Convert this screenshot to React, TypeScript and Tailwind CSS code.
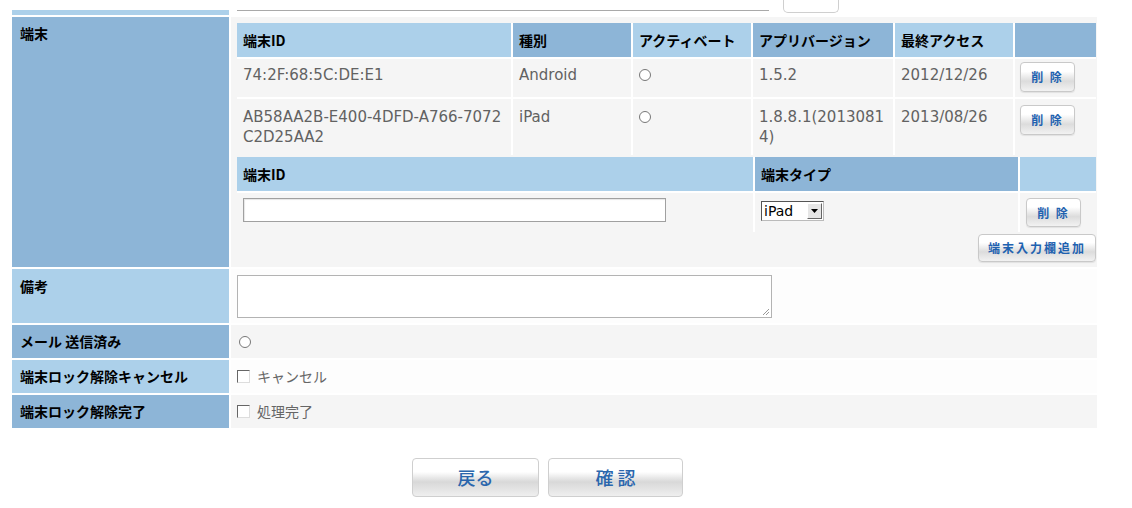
import React from "react";

const jp = "font-['Noto_Sans_CJK_JP',sans-serif]";
const dv = "font-['DejaVu_Sans','Noto_Sans_CJK_JP',sans-serif]";
const DARK = "bg-[#8db5d7]";
const LIGHT = "bg-[#acd0ea]";

function SmallBtn({ label, w = "w-[55px]", h = "h-[30px]" }: { label: string; w?: string; h?: string }) {
  return (
    <div
      className={`${w} ${h} ${jp} flex items-center justify-center rounded-[4px] border border-[#c9c9c9] bg-[linear-gradient(#ffffff_0%,#ffffff_30%,#dcdcdc_65%,#f2f2f2_100%)] text-[12px] font-bold tracking-[2px] text-[#1f62b0] shadow-[0_1px_1px_rgba(0,0,0,0.08)]`}
    >
      {label}
    </div>
  );
}

function BigBtn({ label, w }: { label: string; w: string }) {
  return (
    <div
      className={`${w} h-[39px] ${jp} flex items-center justify-center rounded-[4px] border border-[#cfcfcf] bg-[linear-gradient(#ffffff_0%,#ffffff_35%,#d8d8d8_62%,#efefef_100%)] text-[18px] font-medium text-[#2a66ad]`}
    >
      {label}
    </div>
  );
}

function Circle() {
  return <span className="inline-block h-[12px] w-[12px] rounded-full border border-[#777] bg-white" />;
}

function Check() {
  return (
    <span className="inline-block h-[13px] w-[13px] border-t border-l border-b border-r border-t-[#666] border-l-[#666] border-b-[#ddd] border-r-[#ddd] bg-white" />
  );
}

function Head({ children, dark }: { children?: React.ReactNode; dark?: boolean }) {
  return (
    <div className={`${dark ? DARK : LIGHT} h-[34px] px-[6px] flex items-center ${jp} text-[14px] font-bold text-black`}>
      {children}
    </div>
  );
}

function Cell({ children, className = "" }: { children?: React.ReactNode; className?: string }) {
  return (
    <div className={`bg-[#f5f5f5] px-[6px] pt-[6px] ${dv} text-[15px] leading-[20px] text-[#626262] ${className}`}>
      {children}
    </div>
  );
}

function Label({ children, dark, className = "" }: { children?: React.ReactNode; dark?: boolean; className?: string }) {
  return (
    <div className={`${dark ? DARK : LIGHT} px-[8px] pt-[8px] ${jp} text-[14px] leading-[16px] font-bold text-black ${className}`}>
      {children}
    </div>
  );
}

export default function App() {
  return (
    <div className="w-[1132px] h-[508px] bg-white pl-[12px] overflow-hidden">
      <div className="grid grid-cols-[217px_866px] gap-[2px] bg-white">
        {/* partial previous row */}
        <div className="h-[15px] pt-[10px]">
          <div className={`h-[5px] ${LIGHT}`} />
        </div>
        <div className="h-[15px] bg-white flex items-start">
          <div className="ml-[6px] w-[532px] h-[11px] border-b border-[#a9a9a9]" />
          <div className="ml-[14px] w-[56px] h-[13px] rounded-b-[5px] border border-t-0 border-[#cfcfcf]" />
        </div>

        {/* 端末 */}
        <Label dark className="h-[250px]">端末</Label>
        <div className="bg-[#f5f5f5] pl-[6px] pr-[1px] pt-[6px] pb-[3px]">
          <div className="grid grid-cols-[274px_118px_118px_140px_118px_81px] gap-[2px] bg-white">
            <Head>端末ID</Head>
            <Head dark>種別</Head>
            <Head>アクティベート</Head>
            <Head dark>アプリバージョン</Head>
            <Head>最終アクセス</Head>
            <Head dark />

            <Cell className="h-[38px]">74:2F:68:5C:DE:E1</Cell>
            <Cell className="h-[38px]">Android</Cell>
            <Cell className="h-[38px] flex items-start !pt-[10px]"><Circle /></Cell>
            <Cell className="h-[38px]">1.5.2</Cell>
            <Cell className="h-[38px]">2012/12/26</Cell>
            <Cell className="h-[38px] !pt-[3px] !px-[5px]"><SmallBtn label="削 除" /></Cell>

            <Cell className="h-[56px] !pt-[8px]">
              <div className="whitespace-nowrap">AB58AA2B-E400-4DFD-A766-7072</div>
              <div className="whitespace-nowrap">C2D25AA2</div>
            </Cell>
            <Cell className="h-[56px] !pt-[8px]">iPad</Cell>
            <Cell className="h-[56px] flex items-start !pt-[12px]"><Circle /></Cell>
            <Cell className="h-[56px] !pt-[8px]">
              <div className="whitespace-nowrap">1.8.8.1(2013081</div>
              <div className="whitespace-nowrap">4)</div>
            </Cell>
            <Cell className="h-[56px] !pt-[8px]">2013/08/26</Cell>
            <Cell className="h-[56px] !pt-[6px] !px-[5px]"><SmallBtn label="削 除" /></Cell>
          </div>

          <div className="mt-[2px] grid grid-cols-[516px_263px_76px] gap-[2px] bg-white">
            <Head>端末ID</Head>
            <Head dark>端末タイプ</Head>
            <Head />

            <div className="bg-[#f5f5f5] h-[39px] pl-[6px] pt-[5px]">
              <div className="w-[423px] h-[24px] bg-white border border-[#a0a0a0] shadow-[inset_1px_1px_1px_rgba(0,0,0,0.1)]" />
            </div>
            <div className="bg-[#f5f5f5] h-[39px] pl-[6px] pt-[8px]">
              <div className={`w-[63px] h-[20px] bg-white flex items-center border border-t-[#555] border-l-[#555] border-b-[#bbb] border-r-[#bbb] ${dv} text-[14px] text-black`}>
                <span className="pl-[2px] leading-[18px]">iPad</span>
                <span className="ml-auto mr-[1px] w-[15px] h-[16px] bg-[#e6e6e6] border border-t-[#fff] border-l-[#fff] border-b-[#666] border-r-[#666] flex items-center justify-center">
                  <svg width="7" height="4" viewBox="0 0 7 4"><path d="M0 0h7L3.5 4z" fill="#000" /></svg>
                </span>
              </div>
            </div>
            <div className="bg-[#f5f5f5] h-[39px] pl-[6px] pt-[5px]">
              <SmallBtn label="削 除" h="h-[29px]" />
            </div>
          </div>

          <div className="mt-[2px] flex justify-end">
            <SmallBtn label="端末入力欄追加" w="w-[118px]" h="h-[28px]" />
          </div>
        </div>

        {/* 備考 */}
        <Label className="h-[54px] pt-[9px]">備考</Label>
        <div className="bg-[#fdfdfd] pl-[6px] pt-[6px]">
          <div className="relative w-[535px] h-[43px] bg-white border border-[#b3b3b3]">
            <svg className="absolute right-[1px] bottom-[1px]" width="9" height="9" viewBox="0 0 9 9">
              <path d="M8 2L2 8M8 5L5 8" stroke="#999" strokeWidth="1" />
            </svg>
          </div>
        </div>

        {/* メール送信済み */}
        <Label dark className="h-[33px]">メール 送信済み</Label>
        <div className="bg-[#f5f5f5] h-[33px] pl-[8px] flex items-center"><Circle /></div>

        {/* 端末ロック解除キャンセル */}
        <Label className="h-[33px]">端末ロック解除キャンセル</Label>
        <div className={`bg-[#fdfdfd] h-[33px] pl-[6px] flex items-center gap-[7px] ${jp} text-[14px] text-[#666]`}>
          <Check />
          <span className="-mt-[1px]">キャンセル</span>
        </div>

        {/* 端末ロック解除完了 */}
        <Label dark className="h-[33px]">端末ロック解除完了</Label>
        <div className={`bg-[#f5f5f5] h-[33px] pl-[6px] flex items-center gap-[7px] ${jp} text-[14px] text-[#666]`}>
          <Check />
          <span className="-mt-[1px]">処理完了</span>
        </div>
      </div>

      <div className="mt-[30px] pl-[400px] flex gap-[9px]">
        <BigBtn label="戻る" w="w-[127px]" />
        <BigBtn label="確 認" w="w-[135px]" />
      </div>
    </div>
  );
}
